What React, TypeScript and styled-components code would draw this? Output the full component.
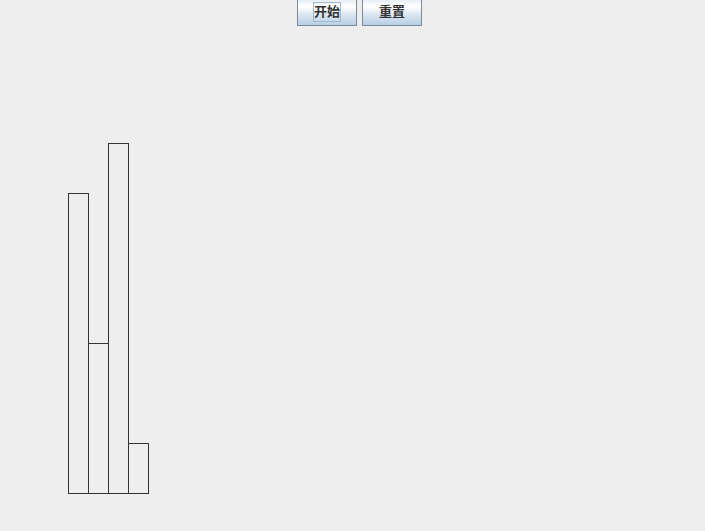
import React, { useState } from "react";
import styled, { createGlobalStyle } from "styled-components";

const GlobalStyle = createGlobalStyle`
  body {
    margin: 0;
    background: #eeeeee;
    font-family: "Liberation Sans", "Noto Sans CJK SC", sans-serif;
  }
`;

const Page = styled.div`
  display: flex;
  flex-direction: column;
  min-height: 100vh;
  overflow: hidden;
`;

const Toolbar = styled.div`
  display: flex;
  justify-content: center;
  gap: 5px;
  padding-left: 14px;
`;

const Button = styled.button`
  display: flex;
  align-items: flex-start;
  justify-content: center;
  box-sizing: border-box;
  width: 60px;
  height: 26px;
  padding: 2px 0 0;
  border: 1px solid #7a8a99;
  border-top: 0;
  border-radius: 0;
  background: linear-gradient(#e6eef6 0, #ffffff 6px, #ffffff 7px, #dde8f3 14px, #b8cfe5 100%);
  color: #333333;
  font-family: inherit;
  font-size: 13px;
  font-weight: 700;
  line-height: 18px;
  outline: none;
`;

const Label = styled.span<{ $focused: boolean }>`
  border: 1px solid ${(p) => (p.$focused ? "#a3b8cc" : "transparent")};
`;

const Chart = styled.svg`
  display: block;
  margin: 117px 0 0 68px;
  fill: none;
  stroke: #333333;
  stroke-width: 1px;
  shape-rendering: crispEdges;
`;

const BAR_WIDTH = 20;
const MAX_HEIGHT = 350;
const heights = [300, 150, 350, 50];
const actions = ["开始", "重置"];

export default function App() {
  const [focused, setFocused] = useState(0);

  return (
    <Page>
      <GlobalStyle />
      <Toolbar>
        {actions.map((name, i) => (
          <Button key={name} type="button" onFocus={() => setFocused(i)}>
            <Label $focused={focused === i}>{name}</Label>
          </Button>
        ))}
      </Toolbar>
      <Chart
        width={heights.length * BAR_WIDTH + 1}
        height={MAX_HEIGHT + 1}
        role="img"
        aria-hidden="true"
      >
        {heights.map((h, i) => (
          <rect
            key={i}
            x={i * BAR_WIDTH + 0.5}
            y={MAX_HEIGHT - h + 0.5}
            width={BAR_WIDTH}
            height={h}
          />
        ))}
      </Chart>
    </Page>
  );
}
